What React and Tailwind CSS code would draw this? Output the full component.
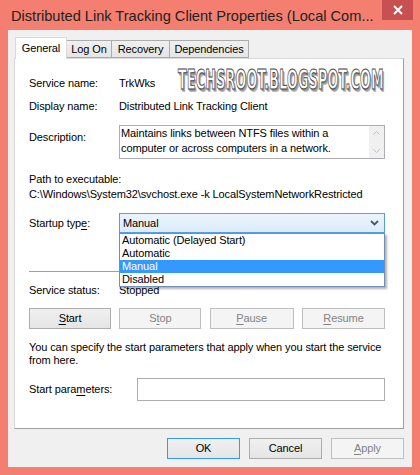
import React from 'react';

const font = { fontFamily: '"Liberation Sans", Arial, sans-serif' };

const U = ({ children }) => <span className="underline underline-offset-[2px]">{children}</span>;

const Btn = ({ children, disabled, primary, className = '' }) => (
    <div
        className={
            'flex items-center justify-center h-[21px] border text-[11px] ' +
            (disabled
                ? 'border-[#BFBFBF] bg-[#F4F4F4] text-[#838383] '
                : primary
                ? 'border-[#3399FF] bg-gradient-to-b from-[#F0F0F0] to-[#E5E5E5] text-black '
                : 'border-[#ADADAD] bg-gradient-to-b from-[#F0F0F0] to-[#E5E5E5] text-black ') +
            className
        }
    >
        {children}
    </div>
);

const Row = ({ label, children, className = '' }) => (
    <div className={'flex items-center h-[14px] ' + className}>
        <div className="w-[90px] shrink-0">{label}</div>
        <div>{children}</div>
    </div>
);

export default function App() {
    return (
        <div className="w-[420px] h-[475px] bg-[#F47E70] flex flex-col overflow-hidden" style={font}>
            {/* Title bar */}
            <div className="h-[30px] flex items-start shrink-0">
                <div className="pl-[11px] pt-[6px] text-[14.6px] leading-[20px] text-[#222] flex-1 whitespace-nowrap">
                    Distributed Link Tracking Client Properties (Local Com...
                </div>
                <div className="w-[31px] h-[20px] mr-[7px] bg-[#C75050] flex items-center justify-center text-white">
                    <svg width="10" height="10" viewBox="0 0 10 10">
                        <path d="M1 1 L9 9 M9 1 L1 9" stroke="white" strokeWidth="2" />
                    </svg>
                </div>
            </div>

            {/* Client area */}
            <div className="ml-[8px] mr-[8px] h-[437px] bg-[#F0F0F0] flex flex-col pl-[6px] pr-[8px] text-[11px] tracking-[-0.1px] text-black">
                {/* Tabs */}
                <div className="flex items-end h-[28px] pl-[1px]">
                    <div className="h-[22px] w-[52px] bg-white border border-b-0 border-[#D9D9D9] flex items-center justify-center relative top-[1px] z-10">
                        General
                    </div>
                    <div className="h-[18px] w-[45px] border border-l-0 border-[#ACACAC] flex items-center justify-center bg-gradient-to-b from-[#F0F0F0] to-[#E5E5E5]">
                        Log On
                    </div>
                    <div className="h-[18px] w-[58px] border border-l-0 border-[#ACACAC] flex items-center justify-center bg-gradient-to-b from-[#F0F0F0] to-[#E5E5E5]">
                        Recovery
                    </div>
                    <div className="h-[18px] w-[79px] border border-l-0 border-[#ACACAC] flex items-center justify-center bg-gradient-to-b from-[#F0F0F0] to-[#E5E5E5]">
                        Dependencies
                    </div>
                </div>

                {/* Panel */}
                <div className="h-[371px] bg-white border border-[#D9D9D9] border-b-[#A0A0A0] border-r-[#A0A0A0] pl-[14px] pr-[18px] flex flex-col relative">
                    <div className="absolute left-[163px] top-[9px] text-[26px] leading-[24px] font-bold text-white tracking-[0.5px] scale-x-[0.54] origin-left whitespace-nowrap"
                        style={{
                            fontFamily: '"DejaVu Sans Condensed", "DejaVu Sans", sans-serif',
                            WebkitTextStroke: '1px #444',
                            textShadow: '2px 2px 0 #999, 3px 3px 0 #bbb',
                        }}
                    >
                        TECHSROOT.BLOGSPOT.COM
                    </div>

                    <Row label="Service name:" className="mt-[17px]">TrkWks</Row>
                    <Row label="Display name:" className="mt-[9px]">Distributed Link Tracking Client</Row>

                    <div className="flex mt-[12px]">
                        <div className="w-[90px] shrink-0 pt-[5px] leading-[14px]">Description:</div>
                        <div className="flex-1 h-[34px] border border-[#ABADB3] flex">
                            <div className="flex-1 leading-[15px] pl-[1px]">
                                Maintains links between NTFS files within a
                                <br />
                                computer or across computers in a network.
                            </div>
                            <div className="w-[15px] bg-[#F0F0F0] flex flex-col items-center justify-between py-[5px]">
                                <svg width="7" height="4" viewBox="0 0 7 4">
                                    <path d="M0.5 3.5 L3.5 0.5 L6.5 3.5" stroke="#BFBFBF" fill="none" />
                                </svg>
                                <svg width="7" height="4" viewBox="0 0 7 4">
                                    <path d="M0.5 0.5 L3.5 3.5 L6.5 0.5" stroke="#BFBFBF" fill="none" />
                                </svg>
                            </div>
                        </div>
                    </div>

                    <div className="mt-[13px] h-[14px] leading-[14px]">Path to executable:</div>
                    <div className="mt-[1px] h-[14px] leading-[14px] whitespace-nowrap">
                        C:\Windows\System32\svchost.exe -k LocalSystemNetworkRestricted
                    </div>

                    <div className="flex items-center mt-[12px] relative">
                        <div className="w-[90px] shrink-0">
                            Startup typ<U>e</U>:
                        </div>
                        <div className="flex-1 h-[20px] border border-[#569DE5] bg-gradient-to-b from-[#ECF4FC] to-[#DCECFC] flex items-center pl-[3px] pr-[5px]">
                            <span className="flex-1">Manual</span>
                            <svg width="9" height="6" viewBox="0 0 9 6">
                                <path d="M1 1 L4.5 4.5 L8 1" stroke="#555" strokeWidth="1.8" fill="none" />
                            </svg>
                        </div>
                        {/* Open dropdown list */}
                        <div className="absolute left-[90px] right-0 top-[20px] z-20 bg-white border border-[#6F8FB7] shadow-[2px_2px_2px_rgba(0,0,0,0.3)] leading-[13px]">
                            <div className="pl-[2px]">Automatic (Delayed Start)</div>
                            <div className="pl-[2px]">Automatic</div>
                            <div className="pl-[2px] bg-[#3399FF] text-white">Manual</div>
                            <div className="pl-[2px]">Disabled</div>
                        </div>
                    </div>

                    <div className="mt-[38px] h-[1px] bg-[#A0A0A0]" />

                    <Row label="Service status:" className="mt-[11px]">Stopped</Row>

                    <div className="mt-[11px] flex justify-between">
                        <Btn className="w-[82px]"><span><U>S</U>tart</span></Btn>
                        <Btn disabled className="w-[82px]"><span>S<U>t</U>op</span></Btn>
                        <Btn disabled className="w-[84px]"><span><U>P</U>ause</span></Btn>
                        <Btn disabled className="w-[83px]"><span><U>R</U>esume</span></Btn>
                    </div>

                    <div className="mt-[12px] leading-[13px] whitespace-nowrap">
                        You can specify the start parameters that apply when you start the service
                        <br />
                        from here.
                    </div>

                    <div className="flex items-center mt-[11px]">
                        <div className="w-[108px] shrink-0">
                            Start para<U>m</U>eters:
                        </div>
                        <div className="flex-1 h-[23px] border border-[#ABADB3] bg-white" />
                    </div>
                </div>

                {/* Bottom buttons */}
                <div className="flex justify-end gap-[9px] mt-[9px]">
                    <Btn primary className="w-[73px]">OK</Btn>
                    <Btn className="w-[73px]">Cancel</Btn>
                    <Btn disabled className="w-[73px]"><span><U>A</U>pply</span></Btn>
                </div>
            </div>
        </div>
    );
}
